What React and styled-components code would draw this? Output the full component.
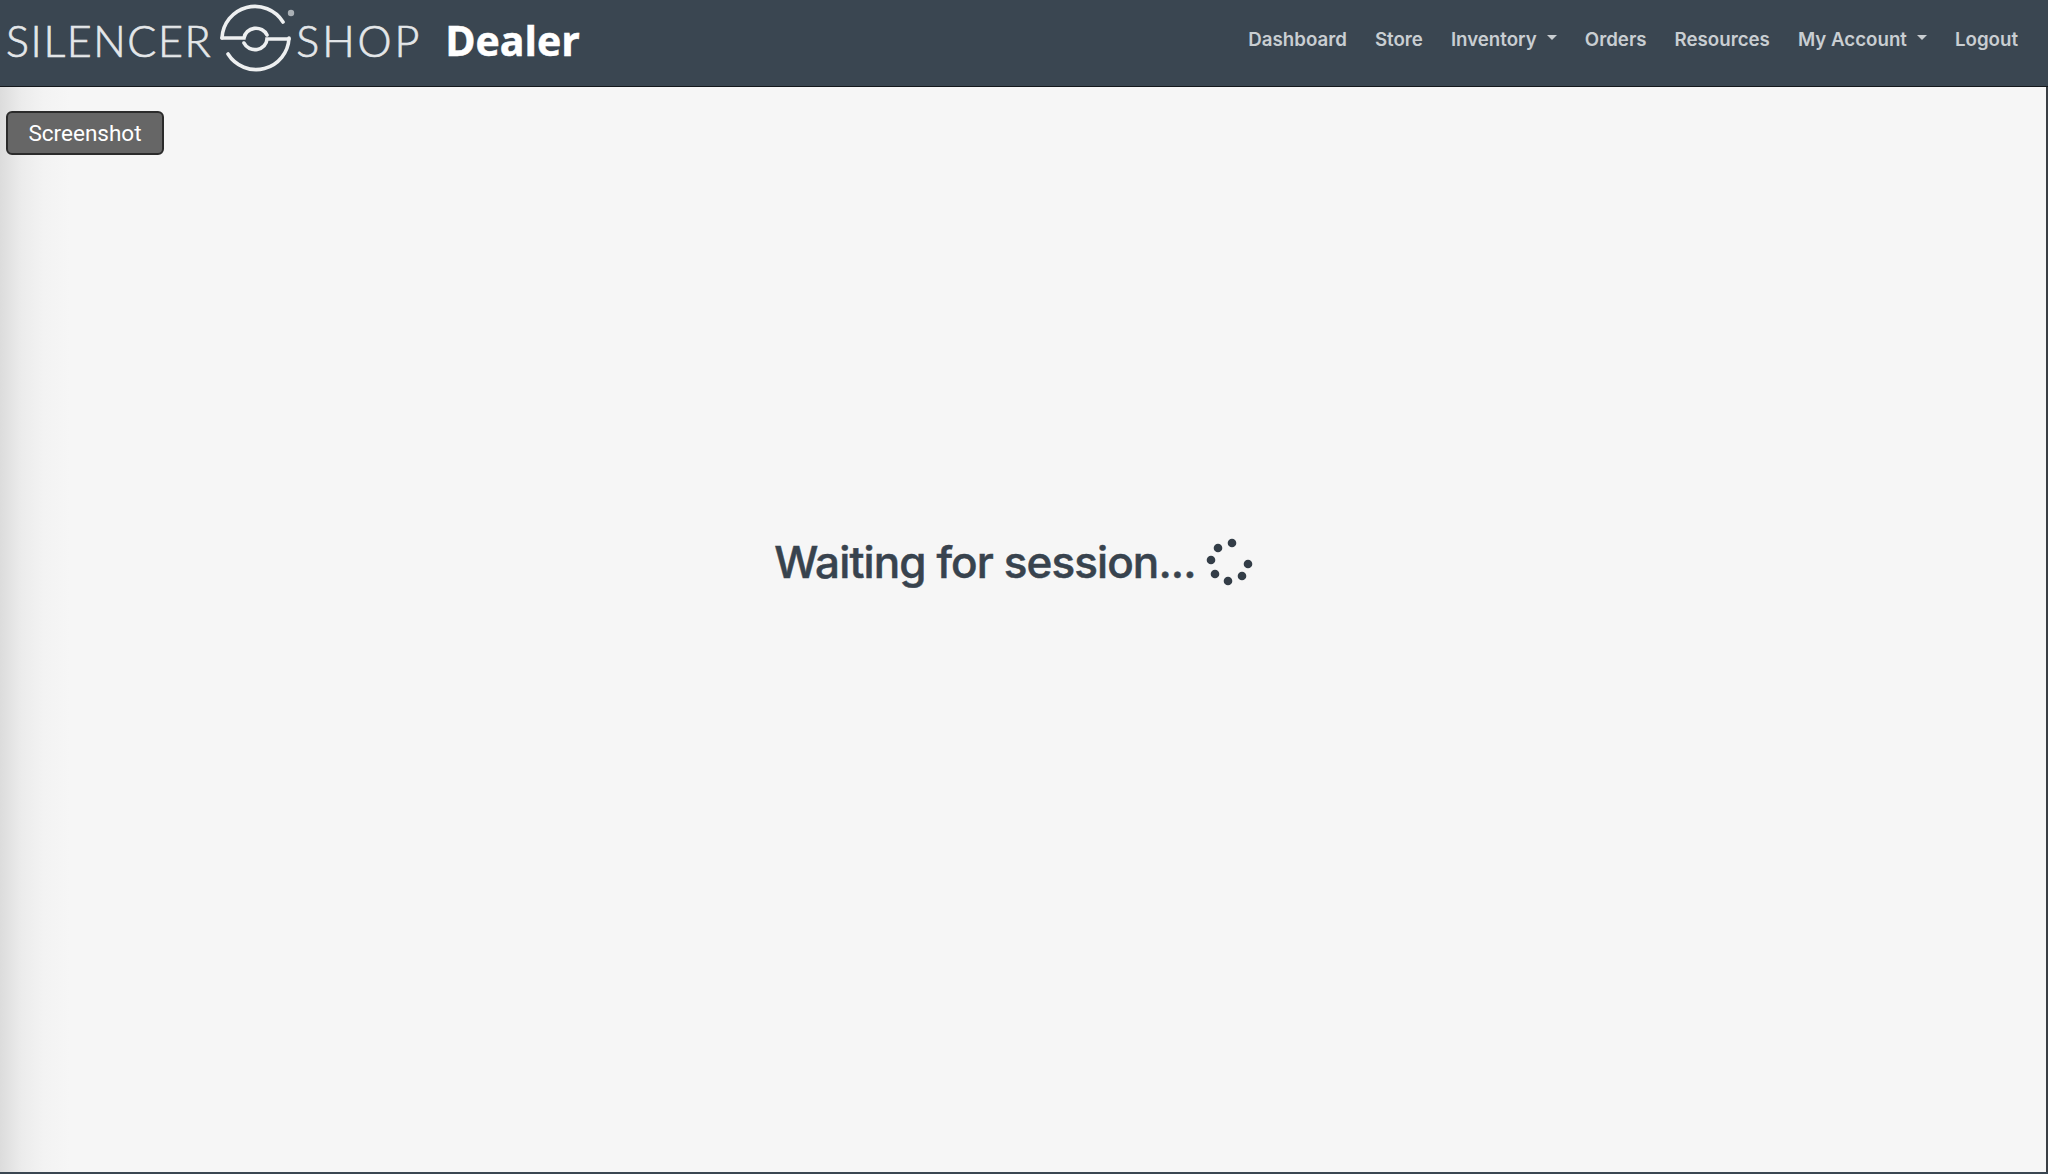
import React from 'react';
import styled, { createGlobalStyle } from 'styled-components';

const links = [
  { label: 'Dashboard' },
  { label: 'Store' },
  { label: 'Inventory', caret: true },
  { label: 'Orders' },
  { label: 'Resources' },
  { label: 'My Account', caret: true },
  { label: 'Logout' },
];

const dots = [
  [12, 10],
  [26, 5],
  [5, 22],
  [9, 36],
  [22, 43],
  [36, 38],
  [42, 26],
];

export default function App() {
  return (
    <Page>
      <GlobalStyle />
      <Navbar>
        <Brand>
          <LogoWord>SILENCER</LogoWord>
          <LogoMark viewBox='0 0 80 72'>
            <g fill='none' stroke='#eef0f1' strokeWidth='3.6' strokeLinecap='round'>
              <path d='M6 37 A33 33 0 0 1 67 21' />
              <path d='M73 37 A33 33 0 0 1 12 53' />
              <path d='M6 37 H28 A12 11 0 0 1 51 34' />
              <path d='M73 38 H51 A12 11 0 0 1 28 42' />
            </g>
            <circle cx='75' cy='12' r='3.2' fill='#aab0b5' />
          </LogoMark>
          <LogoWord $wide>SHOP</LogoWord>
          <Dealer>Dealer</Dealer>
        </Brand>
        <NavList>
          {links.map((link) => (
            <NavLink key={link.label} href='#'>
              {link.label}
              {link.caret && <Caret />}
            </NavLink>
          ))}
        </NavList>
      </Navbar>
      <Main>
        <Toolbar>
          <ShotButton>Screenshot</ShotButton>
        </Toolbar>
        <Waiting>
          <Message>Waiting for session...</Message>
          <Spinner viewBox='0 0 48 48'>
            {dots.map(([x, y]) => (
              <circle key={x} cx={x} cy={y} r='4.3' fill='#333d47' />
            ))}
          </Spinner>
        </Waiting>
      </Main>
      <BottomEdge />
    </Page>
  );
}

const GlobalStyle = createGlobalStyle`
  html, body {
    margin: 0;
    padding: 0;
    height: 100%;
  }
  #root {
    height: 100%;
  }
`;

const Page = styled.div`
  height: 1174px;
  display: flex;
  flex-direction: column;
  overflow: hidden;
  background: #f6f6f6;
  font-family: Inter, 'Liberation Sans', sans-serif;
`;

const Navbar = styled.header`
  height: 87px;
  box-sizing: border-box;
  flex: none;
  display: flex;
  align-items: center;
  justify-content: space-between;
  background: #3a4651;
  border-bottom: 1px solid #14181c;
  padding: 0 30px 8px 6px;
`;

const Brand = styled.div`
  display: flex;
  align-items: center;
`;

const LogoWord = styled.span`
  font-family: Lato, sans-serif;
  font-weight: 300;
  font-size: 43px;
  line-height: 1;
  letter-spacing: ${(p) => (p.$wide ? '2.9px' : '1.6px')};
  color: #e4e7e9;
  -webkit-text-stroke: 0.7px #e4e7e9;
  margin-top: 2px;
`;

const LogoMark = styled.svg`
  width: 80px;
  height: 72px;
  flex: none;
  margin: -4px 0 0 4px;
`;

const Dealer = styled.span`
  font-family: 'Open Sans', sans-serif;
  font-weight: 700;
  font-size: 41px;
  line-height: 1;
  color: #fff;
  -webkit-text-stroke: 0.5px #fff;
  margin: 2px 0 0 23px;
`;

const NavList = styled.nav`
  display: flex;
  align-items: center;
  gap: 28px;
`;

const NavLink = styled.a`
  display: flex;
  align-items: center;
  font-size: 18.7px;
  font-weight: 600;
  line-height: 27px;
  color: #c9ced2;
  text-decoration: none;
`;

const Caret = styled.i`
  width: 0;
  height: 0;
  margin: -3px 0 0 10px;
  border-top: 5px solid #c9ced2;
  border-left: 5.5px solid transparent;
  border-right: 5.5px solid transparent;
`;

const Main = styled.main`
  flex: 1;
  min-height: 0;
  display: flex;
  flex-direction: column;
  background: linear-gradient(90deg, #dcdcdc 0, #ececec 22px, #f3f3f3 44px, #f6f6f6 70px);
  border-right: 2px solid #3a3f44;
`;

const Toolbar = styled.div`
  padding: 24px 6px 0;
`;

const ShotButton = styled.button`
  display: block;
  width: 158px;
  height: 44px;
  padding: 0;
  font-family: Roboto, sans-serif;
  font-size: 22.5px;
  color: #fff;
  background: #666;
  border: 2px solid #2b2b2b;
  border-radius: 6px;
`;

const Waiting = styled.div`
  flex: 1;
  display: flex;
  align-items: center;
  justify-content: center;
  gap: 10px;
  padding: 0 18px 204px 0;
`;

const Message = styled.h1`
  margin: 0;
  font-size: 44px;
  font-weight: 500;
  letter-spacing: -0.9px;
  color: #38434e;
  -webkit-text-stroke: 0.5px #38434e;
`;

const Spinner = styled.svg`
  width: 48px;
  height: 48px;
  flex: none;
`;

const BottomEdge = styled.div`
  height: 2px;
  flex: none;
  background: #3a4651;
`;
